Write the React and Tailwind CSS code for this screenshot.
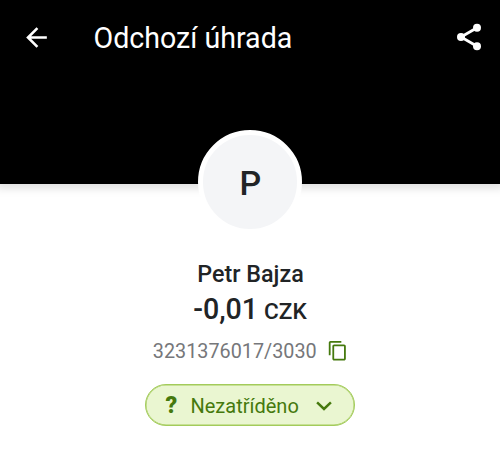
const ArrowBackIcon = (props) => (
  <svg viewBox="0 0 24 24" fill="currentColor" {...props}>
    <path d="M20 11H7.83l5.59-5.59L12 4l-8 8 8 8 1.41-1.41L7.83 13H20v-2z" />
  </svg>
);

const ShareIcon = (props) => (
  <svg viewBox="0 0 24 24" fill="currentColor" {...props}>
    <path d="M18 5L6 12l12 7" fill="none" stroke="currentColor" strokeWidth="2.1" />
    <circle cx="18" cy="5" r="3" />
    <circle cx="6" cy="12" r="3" />
    <circle cx="18" cy="19" r="3" />
  </svg>
);

const CopyIcon = (props) => (
  <svg viewBox="0 0 24 24" fill="currentColor" {...props}>
    <path d="M16 1H4c-1.1 0-2 .9-2 2v14h2V3h12V1zm3 4H8c-1.1 0-2 .9-2 2v14c0 1.1.9 2 2 2h11c1.1 0 2-.9 2-2V7c0-1.1-.9-2-2-2zm0 16H8V7h11v14z" />
  </svg>
);

const ChevronIcon = (props) => (
  <svg viewBox="0 0 16 10" fill="none" stroke="currentColor" strokeWidth="2.5" {...props}>
    <path d="M1.1 1.4l6.9 6.6 6.9-6.6" />
  </svg>
);

function TopBar() {
  return (
    <header className="h-[184px] bg-black text-white shadow-[0_0_9px_4px_rgba(0,0,0,0.13)]">
      <div className="flex h-[74px] items-center pl-[21px] pr-[15px]">
        <button aria-label="Zpět">
          <ArrowBackIcon className="size-[31px]" />
        </button>
        <h1 className="ml-[41.5px] flex-1 pt-[3px] text-[28.6px] leading-none whitespace-nowrap">Odchozí úhrada</h1>
        <button aria-label="Sdílet">
          <ShareIcon className="size-8" />
        </button>
      </div>
    </header>
  );
}

function Avatar({ initial }) {
  return (
    <div className="relative ml-[0.8px] -mt-[54px] flex size-[104px] items-center justify-center rounded-full border-5 border-white bg-[#f4f5f7] pt-0.5 text-[34px] font-medium">
      {initial}
    </div>
  );
}

function App() {
  return (
    <div className="min-h-screen overflow-hidden bg-white font-['Roboto',sans-serif] text-[#212426]">
      <TopBar />
      <main className="flex flex-col items-center">
        <Avatar initial="P" />
        <h2 className="mt-[25px] ml-px text-[23.3px] leading-[30px] font-medium">Petr Bajza</h2>
        <p className="mt-0.5 flex h-9 items-baseline gap-1.5 font-medium">
          <span className="text-[28.6px] leading-9">-0,01</span>
          <span className="-mt-px pb-px text-[22.6px]">CZK</span>
        </p>
        <div className="mt-2.5 ml-px flex h-7 items-center gap-[10px]">
          <span className="pt-0.5 text-[19.8px] text-[#76777a]">3231376017/3030</span>
          <button aria-label="Kopírovat" className="pb-px text-[#45790d]">
            <CopyIcon className="size-[21.5px]" />
          </button>
        </div>
        <button className="mt-[19px] flex h-[42px] w-[210px] items-center rounded-full border border-[#a3cb5b] bg-[#eaf6d1] pt-px pl-[19.5px] text-[20px] text-[#45790d] ring-[0.5px] ring-[#a3cb5b] ring-inset">
          <span className="w-[25px] text-left text-[23px] leading-none font-black">?</span>
          <span>Nezatříděno</span>
          <ChevronIcon className="ml-[17.5px] h-2.5 w-4" />
        </button>
      </main>
    </div>
  );
}

export default App;
